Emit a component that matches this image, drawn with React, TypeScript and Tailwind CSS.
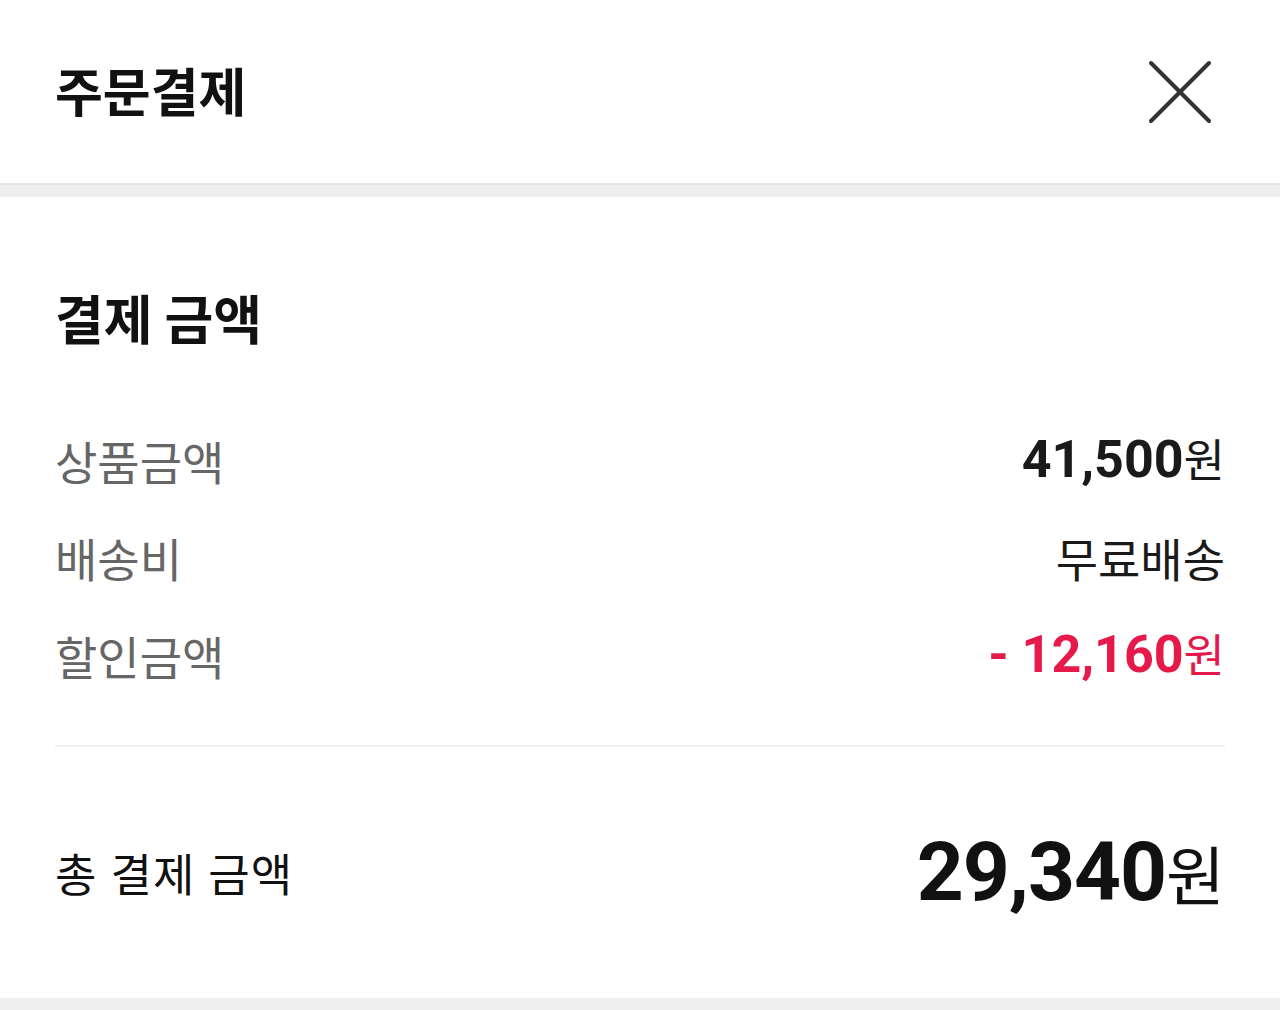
const KR = "font-['Noto_Sans_CJK_KR','Noto_Sans',sans-serif]"

function CloseIcon() {
  return (
    <svg width="64" height="64" viewBox="0 0 64 64" fill="none" stroke="#333333" strokeWidth="4" strokeLinecap="round">
      <path d="M3 3 L61 61" />
      <path d="M61 3 L3 61" />
    </svg>
  )
}

function Won({ value, className, wonClass }: { value: string; className: string; wonClass: string }) {
  return (
    <span className="flex items-baseline">
      <span className={`font-['Roboto',sans-serif] font-bold ${className}`}>{value}</span>
      <span className={`${KR} ${wonClass}`}>원</span>
    </span>
  )
}

export default function App() {
  return (
    <div className={`w-[1280px] h-[1010px] bg-white flex flex-col ${KR}`}>
      {/* 헤더 */}
      <header className="h-[183px] flex items-center justify-between pl-[55px] pr-[68px] shrink-0">
        <h1 className="text-[52px] leading-none font-bold text-[#111111] -mt-1">주문결제</h1>
        <button aria-label="닫기" className="flex items-center justify-center">
          <CloseIcon />
        </button>
      </header>

      <div className="h-[14px] bg-[#eeeeee] border-t-2 border-[#e6e6e6] shrink-0" />

      {/* 결제 금액 */}
      <section className="flex-1 px-[55px] pt-[91px] flex flex-col">
        <h2 className="h-[60px] flex items-center text-[53px] font-bold text-[#111111]">결제 금액</h2>

        <div className="mt-[63px] flex flex-col">
          <div className="h-[98px] flex items-center justify-between">
            <span className="text-[46px] text-[#666666]">상품금액</span>
            <Won value="41,500" className="text-[52px] text-[#1a1a1a]" wonClass="text-[45px] text-[#1a1a1a]" />
          </div>
          <div className="h-[97px] flex items-center justify-between">
            <span className="text-[46px] text-[#666666]">배송비</span>
            <span className="text-[46px] text-[#1a1a1a]">무료배송</span>
          </div>
          <div className="h-[98px] flex items-center justify-between">
            <span className="text-[46px] text-[#666666]">할인금액</span>
            <Won value="- 12,160" className="text-[52px] text-[#e5194a]" wonClass="text-[45px] text-[#e5194a]" />
          </div>
        </div>

        <div className="mt-[41px] h-[2px] bg-[#f1f1f1]" />

        <div className="flex-1 flex items-center justify-between">
          <span className="text-[45px] text-[#111111] tracking-[1px] [word-spacing:2px]">총 결제 금액</span>
          <Won value="29,340" className="text-[82px] text-[#111111] tracking-[-1px]" wonClass="text-[64px] text-[#111111]" />
        </div>
      </section>

      <div className="h-[12px] bg-[#eeeeee] shrink-0" />
    </div>
  )
}
